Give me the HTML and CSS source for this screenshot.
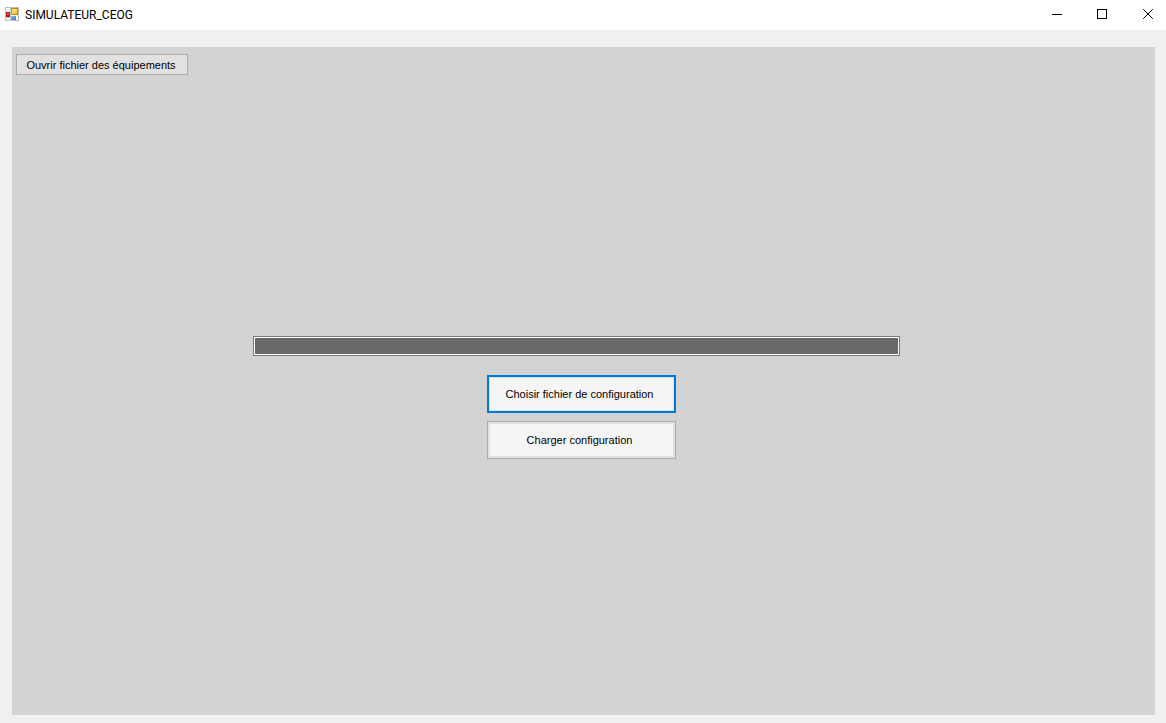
FILE: index.html
```
<!DOCTYPE html>
<html lang="fr">
<head>
<meta charset="utf-8">
<title>SIMULATEUR_CEOG</title>
<link rel="stylesheet" href="styles.css">
</head>
<body>
<div class="window">
  <header class="titlebar">
    <svg class="app-icon" width="14" height="14" viewBox="0 0 14 14" aria-hidden="true">
      <defs>
        <linearGradient id="gold" x2="1" y2="1"><stop stop-color="#fff0a0"/><stop offset="1" stop-color="#f2b51b"/></linearGradient>
        <linearGradient id="blue" x2="1" y2="1"><stop stop-color="#8bbcf5"/><stop offset="1" stop-color="#3b76d0"/></linearGradient>
      </defs>
      <rect x=".5" y=".5" width="13" height="13" fill="#fff" stroke="#bcbcbc"/>
      <path d="M5.500 0v14M0 10.500h6" stroke="#d0d0d0" fill="none"/>
      <rect x="1" y="5" width="4" height="5" fill="#b01816"/>
      <rect x="2" y="6" width="2" height="2" fill="#e8604c"/>
      <rect x="6.500" y="1.500" width="6" height="6" fill="url(#gold)" stroke="#c18a10"/>
      <rect x="6" y="9" width="5" height="4" fill="url(#blue)"/>
    </svg>
    <h1 class="title">SIMULATEUR_CEOG</h1>
    <div class="controls">
      <button class="control" type="button" aria-label="Réduire"><svg width="11" height="11" viewBox="0 0 11 11" shape-rendering="crispEdges"><path d="M1 5.500h10"/></svg></button>
      <button class="control" type="button" aria-label="Agrandir"><svg width="11" height="11" viewBox="0 0 11 11" shape-rendering="crispEdges"><path d="M.5.5h9v9h-9z"/></svg></button>
      <button class="control" type="button" aria-label="Fermer"><svg width="11" height="11" viewBox="0 0 11 11"><path d="M.2.2l9.600 9.600M9.800.2L.2 9.800"/></svg></button>
    </div>
  </header>
  <main class="client">
    <section class="panel">
      <button class="open-button" type="button">Ouvrir fichier des équipements</button>
      <div class="loader">
        <div class="progress" role="progressbar" aria-label="Chargement" aria-valuemin="0" aria-valuemax="100" aria-valuenow="0"></div>
        <div class="actions">
          <button class="action focused" type="button">Choisir fichier de configuration</button>
          <button class="action" type="button">Charger configuration</button>
        </div>
      </div>
    </section>
  </main>
</div>
</body>
</html>
```
FILE: styles.css
```
* { box-sizing: border-box; }
body { margin: 0; font-family: "Liberation Sans", Arial, sans-serif; font-size: 11px; color: #000; }
button { font: inherit; color: inherit; margin: 0; white-space: nowrap; }
.window { display: flex; flex-direction: column; min-height: 100vh; background: #f0f0f0; }
.titlebar { display: flex; align-items: center; height: 30px; padding-left: 5px; background: #fff; }
.app-icon { display: block; margin-bottom: 2px; }
.title { margin: 0 0 0 6px; font-family: Roboto, sans-serif; font-size: 12px; font-weight: 400; line-height: 16px; }
.controls { display: flex; height: 100%; margin-left: auto; }
.control { display: flex; align-items: center; justify-content: center; width: 46px; padding: 0 0 2px 10px; border: 0; background: none; }
.control svg { display: block; fill: none; stroke: #000; }
.client { display: flex; flex: 1; padding: 17px 11px 8px 12px; }
.panel { display: flex; flex: 1; flex-direction: column; padding: 7px 4px; background: #d3d3d3; }
.open-button { align-self: flex-start; width: 172px; height: 21px; padding: 0 2px 0 0; border: 1px solid #adadad; background: #e1e1e1; line-height: 16px; }
.loader { display: flex; flex: 1; flex-direction: column; align-items: center; justify-content: center; gap: 19px; padding-top: 12px; }
.progress { width: 57%; height: 20px; margin-right: 14px; border: 1px solid #7a7a7a; background: #696969; box-shadow: inset 0 0 0 1px #fff; }
.actions { display: flex; flex-direction: column; gap: 8px; margin-right: 4px; }
.action { width: 189px; height: 38px; padding: 0 4px 0 0; border: 1px solid #adadad; background: #f5f5f5; box-shadow: inset 0 0 0 2px #e1e1e1; line-height: 16px; }
.action.focused { border: 2px solid #0078d7; box-shadow: inset 0 0 0 1px #e1e1e1; }
```
